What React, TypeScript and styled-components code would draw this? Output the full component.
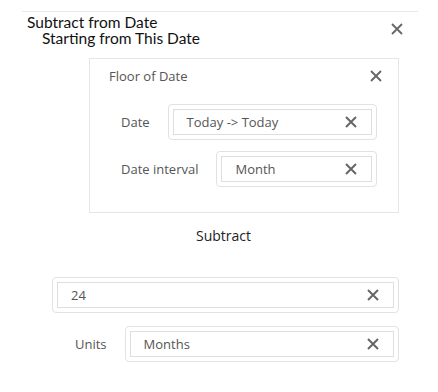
import styled, { createGlobalStyle } from "styled-components";

const GlobalStyle = createGlobalStyle`
    body {
        margin: 0;
        background: #fff;
        font-family: "Open Sans", "Noto Sans", sans-serif;
    }
`;

const Page = styled.div`
    width: 438px;
    height: 392px;
    overflow: hidden;
`;

const Header = styled.div`
    margin: 11px 20px 0 22px;
    border-top: 1px solid #e9e9e9;
    display: flex;
    justify-content: space-between;
    align-items: flex-start;
`;

const TitleBlock = styled.div`
    padding: 2px 0 0 5px;
    font-family: Lato, "Liberation Sans", sans-serif;
    font-size: 15.5px;
    line-height: 16px;
    color: #111;
`;

const SubTitle = styled.div`
    padding-left: 15px;
`;

const CloseButton = styled.button<{ $inline?: boolean }>`
    border: 0;
    background: none;
    padding: 0;
    display: flex;
    color: #666;
    margin: ${(p) => (p.$inline ? "0" : "11px 15px 0 0")};
    cursor: pointer;
`;

const Panel = styled.div`
    margin: 12px 0 0 89px;
    width: 308px;
    height: 153px;
    border: 1px solid #e6e6e6;
`;

const PanelHeader = styled.div`
    display: flex;
    justify-content: space-between;
    align-items: center;
    padding: 8px 16px 0 19px;
    font-size: 13px;
    color: #555;
`;

const PanelBody = styled.div`
    display: flex;
    flex-direction: column;
    gap: 11px;
    padding: 19px 21px 0 31px;
`;

const Row = styled.div<{ $indent?: number }>`
    display: flex;
    align-items: center;
    gap: 18px;
    padding-left: ${(p) => p.$indent ?? 0}px;
`;

const Label = styled.span`
    font-size: 13px;
    color: #555;
    white-space: nowrap;
`;

const Field = styled.div`
    flex: 1;
    border: 1px solid #e2e2e2;
    border-radius: 4px;
    padding: 4px;
`;

const FieldInner = styled.div`
    height: 24px;
    border: 1px solid #dedede;
    display: flex;
    align-items: center;
    justify-content: space-between;
    padding: 0 14px 0 13px;
    font-size: 13px;
    color: #555;
`;

const SectionTitle = styled.div`
    margin: 13px 0 0 196px;
    font-size: 14px;
    color: #222;
    height: 20px;
`;

const Lower = styled.div`
    display: flex;
    flex-direction: column;
    gap: 13px;
    padding: 31px 39px 0 52px;
`;

const XIcon = ({ size = 12, stroke = 2 }: { size?: number; stroke?: number }) => (
    <svg width={size} height={size} viewBox="0 0 12 12">
        <path d="M1 1 L11 11 M11 1 L1 11" stroke="currentColor" strokeWidth={stroke} />
    </svg>
);

const ClearableField = ({ value }: { value: string }) => (
    <Field>
        <FieldInner>
            <span>{value}</span>
            <CloseButton $inline>
                <XIcon />
            </CloseButton>
        </FieldInner>
    </Field>
);

const App: React.FC = () => {
    return (
        <Page>
            <GlobalStyle />
            <Header>
                <TitleBlock>
                    <div>Subtract from Date</div>
                    <SubTitle>Starting from This Date</SubTitle>
                </TitleBlock>
                <CloseButton>
                    <XIcon size={12} stroke={1.8} />
                </CloseButton>
            </Header>
            <Panel>
                <PanelHeader>
                    <span>Floor of Date</span>
                    <CloseButton $inline>
                        <XIcon size={12} stroke={1.8} />
                    </CloseButton>
                </PanelHeader>
                <PanelBody>
                    <Row>
                        <Label>Date</Label>
                        <ClearableField value="Today -> Today" />
                    </Row>
                    <Row>
                        <Label>Date interval</Label>
                        <ClearableField value="Month" />
                    </Row>
                </PanelBody>
            </Panel>
            <SectionTitle>Subtract</SectionTitle>
            <Lower>
                <ClearableField value="24" />
                <Row $indent={23}>
                    <Label>Units</Label>
                    <ClearableField value="Months" />
                </Row>
            </Lower>
        </Page>
    );
};

export default App;
